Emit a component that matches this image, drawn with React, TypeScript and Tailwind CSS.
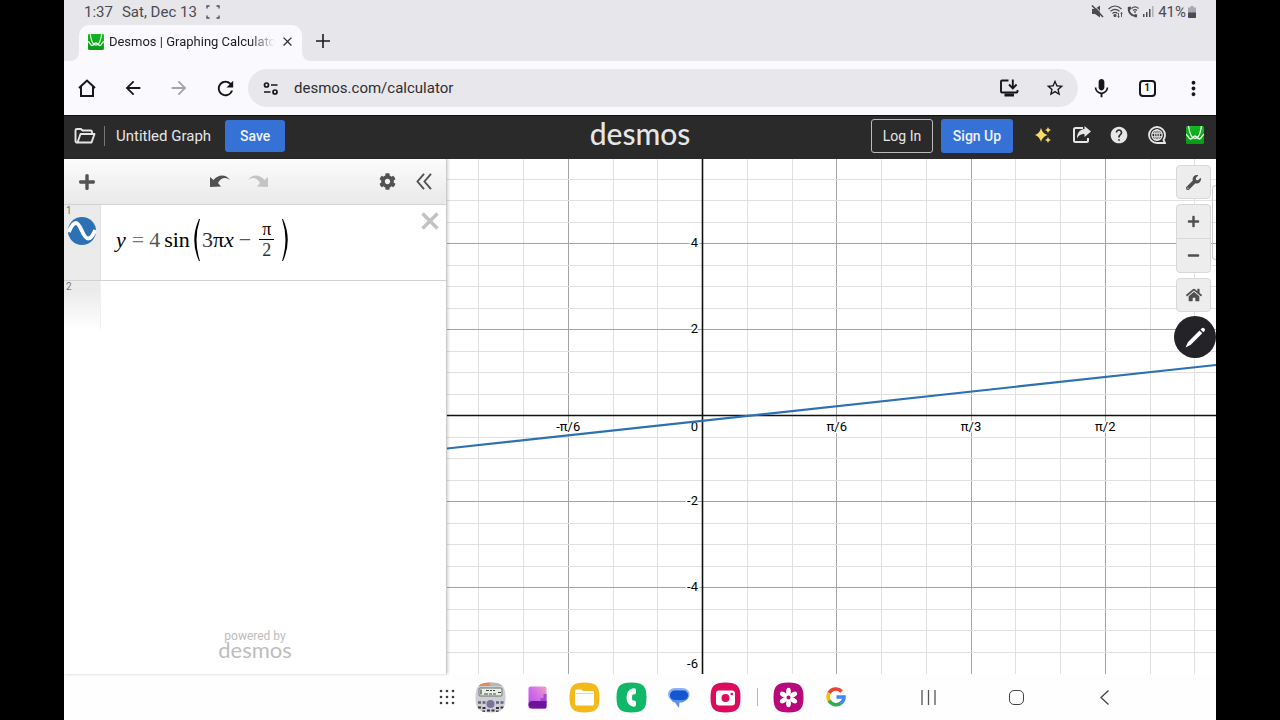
import React, { useState } from 'react';
import { FaCog, FaHome, FaMinus, FaPlus, FaWrench } from 'react-icons/fa';
import {
  MdArrowBack,
  MdArrowForward,
  MdClose,
  MdHelp,
  MdMic,
  MdMoreVert,
  MdOutlineHome,
  MdRefresh,
  MdStarOutline,
} from 'react-icons/md';

type IconButtonProps = {
  label: string;
  className?: string;
  children: React.ReactNode;
};

function IconButton({ label, className = '', children }: IconButtonProps) {
  return (
    <button
      type="button"
      aria-label={label}
      className={'flex shrink-0 items-center justify-center ' + className}
    >
      {children}
    </button>
  );
}

function DesmosIcon({ size }: { size: number }) {
  return (
    <svg width={size} height={size} viewBox="0 0 18 18" fill="none">
      <defs>
        <linearGradient id="desmosGreen" x1="0" y1="0" x2="0" y2="1">
          <stop offset="0" stopColor="#12b81f" />
          <stop offset="1" stopColor="#0a9a18" />
        </linearGradient>
      </defs>
      <rect width="18" height="18" rx="1.5" fill="url(#desmosGreen)" />
      <path d="M2.500 0C3.500 7 5.500 12.500 9 12.500S14.500 7 15.500 0" stroke="#e9ffe9" strokeWidth="1.300" />
      <path
        d="M0 8.500c2 0 2.500 4.500 4.500 4.500S7.500 10 9 10s2.500 3 4.500 3S16 8.500 18 8.500"
        stroke="#e9ffe9"
        strokeWidth="1.500"
      />
    </svg>
  );
}

function StatusBar() {
  return (
    <div className="flex h-[25px] items-center justify-between pr-5 pb-[2px] pl-5 text-[#4c4b50]">
      <div className="flex items-center gap-[9px] text-[15px] leading-6">
        <span>1:37</span>
        <span>Sat, Dec 13</span>
        <svg width="14" height="14" viewBox="0 0 14 14" fill="none" stroke="currentColor" strokeWidth="1.300">
          <path d="M1 3.500V1h2.500M10.500 1H13v2.500M13 10.500V13h-2.500M3.500 13H1v-2.500" />
        </svg>
      </div>
      <div className="flex items-center gap-1">
        <svg width="13" height="13" viewBox="0 0 13 13" fill="currentColor">
          <path d="M1 4h3l5-3.500v12L4 9H1z" />
          <path d="M2.500 0L13 10.500" stroke="#e7e6eb" />
          <path d="M1 .5l11 11.500" stroke="currentColor" strokeWidth="1.600" />
        </svg>
        <svg width="15" height="13" viewBox="0 0 15 13" fill="none" stroke="currentColor" strokeWidth="1.200">
          <path d="M.5 4c4-3.800 9-3.800 13 0M2.500 6.300c3-2.700 6-2.700 9 0M4.500 8.500c1.700-1.500 3.300-1.500 5 0" />
          <circle cx="7" cy="10.500" r="1" fill="currentColor" />
          <path d="M10.500 8v4.500M9.500 11.500l1 1 1-1M13.500 12V7.500M12.500 8.500l1-1 1 1" strokeWidth=".9" />
        </svg>
        <svg width="12" height="13" viewBox="0 0 12 13" fill="none" stroke="currentColor">
          <path d="M2 2.500C.8 7 4.500 11.500 9.500 11" strokeWidth="2" />
          <path d="M1 3.500l3-.5M7.500 10.500l2.500.5" strokeWidth="3" />
          <path d="M4.500 3.500c2.300-2 4.700-2 7 0M6 5.500c1.500-1.300 2.700-1.300 4 0" strokeWidth="1.200" />
          <circle cx="8" cy="7" r=".9" fill="currentColor" stroke="none" />
        </svg>
        <svg width="11" height="11" viewBox="0 0 11 11" fill="currentColor">
          <path d="M0 8h1.500v3H0zM3 6h1.500v5H3zM6 3h1.500v8H6z" />
          <path d="M9 0h1.500v11H9z" opacity=".35" />
        </svg>
        <span className="flex items-center gap-[2px] text-[15px] leading-6">
          41%
          <svg width="8" height="12" viewBox="0 0 8 12">
            <path d="M2.500 0h3v1.500H8V12H0V1.500h2.500z" fill="#aaa9ae" />
            <path d="M0 6.500h8V11q0 1-1 1H1q-1 0-1-1z" fill="#4c4b50" />
          </svg>
        </span>
      </div>
    </div>
  );
}

function TabStrip() {
  return (
    <div className="flex h-9 items-end pl-[5px]">
      <svg width="10" height="10" viewBox="0 0 10 10" className="shrink-0">
        <path d="M10 0v10H0q10 0 10-10z" fill="#faf9fd" />
      </svg>
      <div className="flex h-full w-[223px] shrink-0 items-center rounded-t-[10px] bg-[#faf9fd] pr-[3px] pb-[3px] pl-[9px]">
        <DesmosIcon size={16} />
        <span className="ml-[5px] w-[167px] overflow-hidden bg-linear-to-r from-[#1d1c20] from-85% to-transparent bg-clip-text text-[13px] leading-5 whitespace-nowrap text-transparent">
          Desmos | Graphing Calculator
        </span>
        <IconButton label="Close tab" className="w-6">
          <MdClose size={15} color="#333" />
        </IconButton>
      </div>
      <svg width="10" height="10" viewBox="0 0 10 10" className="shrink-0">
        <path d="M0 0v10h10Q0 10 0 0z" fill="#faf9fd" />
      </svg>
      <IconButton label="New tab" className="ml-px h-full w-5 pb-1">
        <svg width="14" height="14" viewBox="0 0 14 14" stroke="#1d1c20" strokeWidth="1.600">
          <path d="M7 0v14M0 7h14" />
        </svg>
      </IconButton>
    </div>
  );
}

function AddressBar() {
  const [url, setUrl] = useState('desmos.com/calculator');

  return (
    <div className="flex h-[54px] items-center bg-[#faf9fd] text-[#17161a]">
      <IconButton label="Home" className="w-[46px]">
        <svg width="18" height="20" viewBox="0 0 18 20" fill="none" stroke="currentColor" strokeWidth="2">
          <path d="M3 8.500V18h12V8.500M1 10l8-7.500 8 7.500" />
        </svg>
      </IconButton>
      <IconButton label="Back" className="w-[46px]">
        <MdArrowBack size={22} />
      </IconButton>
      <IconButton label="Forward" className="w-[46px] text-[#a5a4a9]">
        <MdArrowForward size={22} />
      </IconButton>
      <IconButton label="Reload" className="w-[46px]">
        <MdRefresh size={23} />
      </IconButton>
      <div className="flex h-[38px] flex-1 items-center rounded-full bg-[#e8e7eb]">
        <IconButton label="Site settings" className="w-[46px]">
          <svg width="16" height="13" viewBox="0 0 16 13" fill="none" stroke="currentColor" strokeWidth="1.700">
            <circle cx="3.500" cy="3" r="2" />
            <path d="M8 3h6.500M1 10h6.500" />
            <circle cx="12" cy="10" r="2" />
          </svg>
        </IconButton>
        <input
          type="text"
          aria-label="Address"
          value={url}
          onChange={(e) => setUrl(e.target.value)}
          className="min-w-0 flex-1 bg-transparent text-[15px] text-[#2e2d31] outline-none"
        />
        <IconButton label="Install app" className="w-[46px]">
          <svg width="20" height="20" viewBox="0 0 20 20" fill="none" stroke="currentColor" strokeWidth="1.900">
            <path d="M9.500 2.500H3q-1 0-1 1v10q0 1 1 1h14.500q1 0 1-1V12" />
            <path d="M13.800 1.500v8M10 6.500l3.800 3.800 3.800-3.800" />
            <path d="M5.500 17h9.500" strokeWidth="3" />
          </svg>
        </IconButton>
        <IconButton label="Bookmark" className="w-[46px]">
          <MdStarOutline size={20} />
        </IconButton>
      </div>
      <IconButton label="Voice search" className="w-[46px]">
        <MdMic size={23} />
      </IconButton>
      <IconButton label="Switch tabs" className="w-[46px]">
        <span className="flex h-[17px] w-[17px] items-center justify-center rounded-[4px] border-2 border-[#17161a] text-[10px] leading-3 font-bold">
          1
        </span>
      </IconButton>
      <IconButton label="More" className="w-[46px]">
        <MdMoreVert size={23} />
      </IconButton>
    </div>
  );
}

function DesmosHeader() {
  return (
    <header className="grid h-[44px] grid-cols-[1fr_auto_1fr] items-center border-t border-[#111] bg-[#2a2a2a] pb-[3px] text-[#e6e6e6]">
      <div className="flex items-center">
        <IconButton label="Open graph" className="w-10 pl-[2px]">
          <svg width="22" height="18" viewBox="0 0 22 18" fill="none" stroke="currentColor" strokeWidth="1.900" strokeLinejoin="round">
            <path d="M3.500 15.500l3-8.500h14l-3 8.500z" />
            <path d="M3.500 15.500q-2 0-2-1.500V3.500Q1.500 2 3 2h4l1.500 1.500h8q1.500 0 1.500 1.500v2" />
          </svg>
        </IconButton>
        <span className="h-5 w-px bg-[#777]" />
        <span className="ml-[11px] text-[15px]">Untitled Graph</span>
        <button
          type="button"
          className="ml-[14px] h-8 w-[60px] rounded-[3px] bg-[#3671d6] text-sm font-medium text-[#eef3fc]"
        >
          Save
        </button>
      </div>
      <h1 className="pb-[7px] font-[Lato] text-[30px] leading-8 font-medium">desmos</h1>
      <div className="flex items-center justify-end pr-[2px]">
        <a
          href="#login"
          className="flex h-[34px] w-[62px] items-center justify-center rounded-[3px] border border-[#bbb] text-sm"
        >
          Log In
        </a>
        <a
          href="#signup"
          className="mr-[11px] ml-2 flex h-[34px] w-[72px] items-center justify-center rounded-[3px] bg-[#3671d6] text-sm font-medium text-[#eef3fc]"
        >
          Sign Up
        </a>
        <div className="flex items-center pb-[3px]">
          <IconButton label="What's new" className="w-[38px]">
            <svg width="17" height="16" viewBox="0 0 17 16" fill="#fbdc62">
              <path d="M6 1Q7.500 6.500 12.500 8 7.500 9.500 6 15 4.500 9.500 0 8 4.500 6.500 6 1z" />
              <path d="M13 0q.4 2.600 3 3-2.600.4-3 3-.4-2.600-3-3 2.600-.4 3-3zM13 10q.4 2.600 3 3-2.600.4-3 3-.4-2.600-3-3 2.600-.4 3-3z" />
            </svg>
          </IconButton>
          <IconButton label="Share" className="w-[38px]">
            <svg width="19" height="18" viewBox="0 0 19 18" fill="none">
              <path
                d="M11 2H3.500Q2 2 2 3.500v11Q2 16 3.500 16h11q1.500 0 1.500-1.500V12"
                stroke="currentColor"
                strokeWidth="2"
              />
              <path d="M12.500 0L19 5.500 12.500 11V8C9 8 7 9 5 12.500 5 7 7.500 3.500 12.500 3z" fill="currentColor" />
            </svg>
          </IconButton>
          <IconButton label="Help" className="w-[38px]">
            <MdHelp size={20} />
          </IconButton>
          <IconButton label="Language" className="w-[38px]">
            <svg width="18" height="18" viewBox="0 0 18 18" fill="none" stroke="currentColor">
              <path d="M9 17A8 8 0 1 1 17 9q0 3-1.500 5l1.500 3z" strokeWidth="1.800" />
              <circle cx="9" cy="9" r="5.200" strokeWidth="1.300" />
              <ellipse cx="9" cy="9" rx="2.300" ry="5.200" strokeWidth="1.100" />
              <path d="M4 7.200h10M4 10.800h10M9 4v10" strokeWidth="1.100" />
            </svg>
          </IconButton>
          <IconButton label="Calculators" className="w-[38px]">
            <DesmosIcon size={18} />
          </IconButton>
        </div>
      </div>
    </header>
  );
}

function Paren({ close = false }: { close?: boolean }) {
  return (
    <svg width="7" height="42" viewBox="0 0 7 42" fill="#000">
      {close ? (
        <path d="M1 0Q10.500 21 1 42H0Q7 21 0 0z" />
      ) : (
        <path d="M6 0Q-3.500 21 6 42h1Q0 21 7 0z" />
      )}
    </svg>
  );
}

function Formula() {
  return (
    <div className="flex items-center font-['Liberation_Serif',serif] text-[22px] leading-6 text-black">
      <i>y</i>
      <span className="ml-[6px] text-[#777]">=</span>
      <span className="ml-[5px] text-[#555]">4</span>
      <span className="ml-1">sin</span>
      <span className="ml-[3px] flex items-center">
        <Paren />
        <span className="ml-[2px] text-[#333]">3</span>
        <span>π</span>
        <i>x</i>
        <span className="ml-[5px] text-[#555]">−</span>
        <span className="mx-2 flex w-[15px] flex-col items-center text-lg leading-5">
          <span className="w-full border-b border-black text-center">π</span>
          <span className="text-[#333]">2</span>
        </span>
        <Paren close />
      </span>
    </div>
  );
}

function ExpressionPanel() {
  return (
    <section className="relative z-10 flex w-[383px] shrink-0 flex-col border-r border-[#ccc] bg-white shadow-[1px_0_3px_#0003]">
      <div className="flex h-[46px] items-center border-b border-[#d2d2d2] bg-linear-to-b from-[#fcfcfc] to-[#e9e9e9] text-[#525252]">
        <IconButton label="Add item" className="w-[46px]">
          <FaPlus size={18} />
        </IconButton>
        <IconButton label="Undo" className="ml-[91px] w-[38px]">
          <svg width="20" height="14" viewBox="0 0 20 14" fill="currentColor">
            <path d="M0 2l3.500 3C8-.5 15.500-1.500 20 5c-4.500-3.500-9-2.500-12 3l3 3.500L0 12z" />
          </svg>
        </IconButton>
        <IconButton label="Redo" className="w-[38px] text-[#c4c4c4]">
          <svg width="20" height="14" viewBox="0 0 20 14" fill="currentColor">
            <path d="M20 2l-3.500 3C12-.5 4.500-1.500 0 5c4.500-3.500 9-2.500 12 3l-3 3.500L20 12z" />
          </svg>
        </IconButton>
        <IconButton label="Settings" className="ml-auto w-[38px]">
          <FaCog size={17} />
        </IconButton>
        <IconButton label="Hide list" className="mr-1 w-9">
          <svg width="16" height="17" viewBox="0 0 16 17" fill="none" stroke="currentColor" strokeWidth="1.900">
            <path d="M8 .8L1.500 8.500 8 16.200M15 .8L8.500 8.500 15 16.200" />
          </svg>
        </IconButton>
      </div>

      <div className="flex h-[76px] border-b border-[#d2d2d2]">
        <div className="flex w-[37px] shrink-0 flex-col border-r border-[#e0e0e0] bg-[#ebebeb]">
          <span className="pl-[2px] text-[10px] leading-3 text-[#777]">1</span>
          <IconButton label="Toggle curve" className="w-9">
            <svg width="28" height="28" viewBox="0 0 28 28" fill="none">
              <circle cx="14" cy="14" r="14" fill="#2d70b3" />
              <path
                d="M.8 15C3.500 8.500 5.500 6 8 6c4.500 0 7 15.500 12 15.500 2.800 0 5-3 7.200-8.500"
                stroke="#fff"
                strokeWidth="3.800"
              />
            </svg>
          </IconButton>
        </div>
        <div className="flex flex-1 items-center pb-[6px] pl-[15px]">
          <Formula />
        </div>
        <IconButton label="Delete expression" className="h-8 w-8">
          <svg width="18" height="18" viewBox="0 0 18 18" stroke="#c2c2c2" strokeWidth="3.400">
            <path d="M1.500 1.500l15 15M16.500 1.500l-15 15" />
          </svg>
        </IconButton>
      </div>

      <div className="h-[48px] w-[37px] border-r border-[#f0f0f0] bg-linear-to-b from-[#ebebeb] from-20% to-white pl-[2px] text-[10px] leading-3 text-[#777]">
        2
      </div>

      <div className="mt-auto flex flex-col items-center pb-4 text-[#bdbdbd]">
        <span className="text-xs leading-3">powered by</span>
        <span className="font-[Lato] text-[22px] leading-4">desmos</span>
      </div>
    </section>
  );
}

// graph paper geometry, origin and spacing in svg units
const ORIGIN_X = 255.5;
const ORIGIN_Y = 256.5;
const STEP_X = 44.75;
const STEP_Y = 21.5;

const xLines = Array.from({ length: 17 }, (_, i) => i - 5);
const yLines = Array.from({ length: 23 }, (_, i) => i - 11);

const xLabels = [
  { n: -3, text: '-π/6' },
  { n: 3, text: 'π/6' },
  { n: 6, text: 'π/3' },
  { n: 9, text: 'π/2' },
];
const yLabels = [
  { y: 88, text: '4' },
  { y: 174, text: '2' },
  { y: 346, text: '-2' },
  { y: 432, text: '-4' },
  { y: 509, text: '-6' },
];

function Graph() {
  return (
    <svg
      viewBox="0 0 769 515"
      preserveAspectRatio="xMinYMin slice"
      className="absolute inset-0 h-full w-full"
    >
      {xLines.map((n) => (
        <path
          key={n}
          d={`M${Math.floor(ORIGIN_X + n * STEP_X) + 0.5} 0V515`}
          stroke={n % 3 === 0 ? '#a3a3a3' : '#e0e0e0'}
        />
      ))}
      {yLines.map((n) => (
        <path
          key={n}
          d={`M0 ${Math.floor(ORIGIN_Y + n * STEP_Y) + 0.5}H769`}
          stroke={n % 4 === 0 ? '#a3a3a3' : '#e0e0e0'}
        />
      ))}
      <path d="M255.500 0V515M0 256.500H769" stroke="#111" strokeWidth="1.600" />
      <g fontSize="13" fill="#000" stroke="#fff" strokeWidth="3" paintOrder="stroke">
        {xLabels.map((l) => (
          <text key={l.text} x={ORIGIN_X + l.n * STEP_X} y="272" textAnchor="middle">
            {l.text}
          </text>
        ))}
        {yLabels.map((l) => (
          <text key={l.text} x="251" y={l.y} textAnchor="end">
            {l.text}
          </text>
        ))}
        <text x="251" y="272" textAnchor="end">
          0
        </text>
      </g>
      <path d="M0 289.500L769 206" stroke="#2d70b3" strokeWidth="2.200" />
    </svg>
  );
}

function GraphControls() {
  return (
    <div className="absolute top-[6px] right-0 flex flex-col items-end gap-1 text-[#4f4f4f]">
      <div className="mr-[5px] flex w-[35px] flex-col gap-[5px]">
        <IconButton label="Graph settings" className="h-[34px] rounded border border-[#d8d8d8] bg-[#ededed]">
          <FaWrench size={15} />
        </IconButton>
        <div className="flex flex-col rounded border border-[#d8d8d8] bg-[#ededed]">
          <IconButton label="Zoom in" className="h-[34px] border-b border-[#d8d8d8]">
            <FaPlus size={13} />
          </IconButton>
          <IconButton label="Zoom out" className="h-[33px]">
            <FaMinus size={13} />
          </IconButton>
        </div>
        <IconButton label="Default viewport" className="h-[34px] rounded border border-[#d8d8d8] bg-[#ededed]">
          <FaHome size={16} />
        </IconButton>
      </div>
      <IconButton label="Edit" className="h-[42px] w-[42px] rounded-full bg-[#242428]">
        <svg width="21" height="22" viewBox="0 0 21 22" fill="#fff">
          <path d="M.5 21.500L3 16 14.500 4.500l2.800 2.800L5.800 18.800zM15.500 3.500l1.300-1.300q1.200-1 2.200 0l.6.6q1 1 0 2.200l-1.300 1.300z" />
        </svg>
      </IconButton>
    </div>
  );
}

function AppTile({ children }: { children: React.ReactNode }) {
  return (
    <svg width="31" height="31" viewBox="0 0 31 31" fill="none">
      {children}
    </svg>
  );
}

function Squircle({ fill }: { fill: string }) {
  return (
    <path
      d="M15.500.5C27 .5 30.500 4 30.500 15.500S27 30.500 15.500 30.500.5 27 .5 15.500 4 .5 15.500.5z"
      fill={fill}
    />
  );
}

function Taskbar() {
  return (
    <nav className="flex h-[46px] items-center bg-[#fefefe] pl-[363px]">
      <IconButton label="All apps" className="w-10">
        <svg width="16" height="16" viewBox="0 0 16 16" fill="#3d3d3d">
          {[2, 8, 14].map((y) =>
            [2, 8, 14].map((x) => <circle key={x + '-' + y} cx={x} cy={y} r="1.300" />)
          )}
        </svg>
      </IconButton>
      <IconButton label="Scientific calculator" className="w-[47px]">
        <AppTile>
          <clipPath id="calcClip">
            <path d="M15.500.5C27 .5 30.500 4 30.500 15.500S27 30.500 15.500 30.500.5 27 .5 15.500 4 .5 15.500.5z" />
          </clipPath>
          <g clipPath="url(#calcClip)">
            <path d="M0 0h31v31H0z" fill="#cfcfd3" />
            <path d="M0 0h15v4H0z" fill="#e58a50" />
            <path d="M15 0h16v4H15z" fill="#b5b5ba" />
            <rect x="4" y="6" width="23" height="8" rx="1" fill="#e6eee4" stroke="#6b6d70" />
            <path d="M6 7.500v5M11 8.500h3M15 8.500h2M18 8.500h2M9 12h4M14 12h3M18 12h3M23 10.500h3" stroke="#444" strokeWidth="1.200" />
            <path d="M3 20.500h3M7.500 20.500h3M21 20.500h3M25.500 20.500h3" stroke="#62627c" strokeWidth="2.400" />
            <path d="M3 25.500h3M7.500 26h3M12 28.500h3M16.500 28.500h3M21 26h3M25.500 25.500h3M7 29.500h3M21 29.500h3" stroke="#35353f" strokeWidth="2" />
            <circle cx="15.500" cy="22" r="4" fill="#77749d" />
          </g>
        </AppTile>
      </IconButton>
      <IconButton label="Books" className="w-[47px]">
        <AppTile>
          <defs>
            <linearGradient id="bookCover" x1="0" y1="1" x2="1" y2="0">
              <stop offset="0" stopColor="#b44be0" />
              <stop offset=".6" stopColor="#d674e8" />
              <stop offset="1" stopColor="#f0a2b4" />
            </linearGradient>
          </defs>
          <rect x="6.500" y="4.500" width="18" height="22" rx="2" fill="url(#bookCover)" />
          <path d="M24.500 12h-3v4h-3v5h6z" fill="#a04bd0" />
          <path d="M24.500 19H10q-3.500 0-3.500 3.500T10 26.500h13q1.500 0 1.500-1.500z" fill="#6d1599" />
        </AppTile>
      </IconButton>
      <IconButton label="My Files" className="w-[47px]">
        <AppTile>
          <Squircle fill="#f2bb1b" />
          <path d="M6 9q0-1.500 1.500-1.500h5l1.500 1.500h10q1 0 1 1V22q0 1.500-1.500 1.500h-16Q6 23.500 6 22z" fill="#fff" />
          <path d="M7 11.500h17" stroke="#f6d97c" />
        </AppTile>
      </IconButton>
      <IconButton label="Phone" className="w-[47px]">
        <AppTile>
          <Squircle fill="#10b768" />
          <path
            d="M16.500 6.500q3.500-1 3.500 1.500v2.500q0 2-2 2h-1q-1 0-1 3t1 3h1q2 0 2 2V23q0 2.500-3.500 1.500-6-2-6-9t6-9z"
            fill="#fff"
          />
        </AppTile>
      </IconButton>
      <IconButton label="Messages" className="w-[47px]">
        <AppTile>
          <path d="M12 6h7c5 0 7.500 3 7.500 6.500S23.500 19 19 19h-6C8 19 5 16 5 12.500S7.500 6 12 6z" fill="#8fb1f5" />
          <path d="M7 13q0-4.500 6-4.500h6q6.500 0 6.500 5T19 20.500h-2.500L16 26l-4-5.500Q7 19.500 7 13z" fill="#5f90f0" />
          <rect x="7" y="8.500" width="18" height="9.500" rx="4.700" fill="#1257cf" />
        </AppTile>
      </IconButton>
      <IconButton label="Camera" className="w-[47px]">
        <AppTile>
          <Squircle fill="#dc0b5c" />
          <rect x="6" y="8.500" width="19" height="15" rx="3" fill="#fff" />
          <circle cx="15.500" cy="16" r="4" fill="#dc0b5c" />
          <circle cx="21.800" cy="12" r="1.300" fill="#dc0b5c" />
        </AppTile>
      </IconButton>
      <span className="flex w-4 justify-center">
        <span className="h-[18px] w-px bg-[#b5b5b5]" />
      </span>
      <IconButton label="Gallery" className="w-[47px]">
        <AppTile>
          <Squircle fill="#b9087a" />
          {[0, 60, 120, 180, 240, 300].map((a) => (
            <ellipse key={a} cx="15.500" cy="9.800" rx="2.400" ry="4" fill="#fff" transform={`rotate(${a} 15.500 15.500)`} />
          ))}
          <circle cx="15.500" cy="15.500" r="3.500" fill="#fff" />
          <circle cx="15.500" cy="15.500" r="2" fill="#b9087a" />
        </AppTile>
      </IconButton>
      <IconButton label="Google" className="w-[47px]">
        <svg width="20" height="20" viewBox="0 0 20 20" fill="none" strokeWidth="3.600">
          <path d="M3 6a8 8 0 0 1 12.700-1.600" stroke="#ea4335" />
          <path d="M3.300 13.800A8 8 0 0 1 3.200 5.800" stroke="#fbbc05" />
          <path d="M14.800 16.200A8 8 0 0 1 3.200 13.600" stroke="#34a853" />
          <path d="M10.500 10h7.500q0 4-3.300 6.300" stroke="#4285f4" />
        </svg>
      </IconButton>
      <IconButton label="Recents" className="ml-[25px] h-9 w-[88px]">
        <svg width="15" height="15" viewBox="0 0 15 15" stroke="#555" strokeWidth="1.300">
          <path d="M1 0v15M7.500 0v15M14 0v15" />
        </svg>
      </IconButton>
      <IconButton label="Home screen" className="h-9 w-[88px]">
        <span className="h-[15px] w-[15px] rounded-[5px] border border-[#444]" />
      </IconButton>
      <IconButton label="Go back" className="h-9 w-[88px]">
        <svg width="9" height="15" viewBox="0 0 9 15" fill="none" stroke="#444" strokeWidth="1.300">
          <path d="M8.500.5l-7.500 7 7.500 7" />
        </svg>
      </IconButton>
    </nav>
  );
}

export default function App() {
  return (
    <div className="min-h-screen bg-black px-[5%] font-[Roboto,sans-serif]">
      <div className="flex min-h-screen flex-col bg-[#e7e6eb]">
        <StatusBar />
        <TabStrip />
        <AddressBar />
        <DesmosHeader />
        <main className="flex flex-1 bg-white">
          <ExpressionPanel />
          <section aria-label="Graph" className="relative flex-1 overflow-hidden">
            <Graph />
            <div className="absolute top-[26px] right-0 h-[75px] w-1 rounded-l border border-r-0 border-[#ccc]" />
            <GraphControls />
          </section>
        </main>
        <Taskbar />
      </div>
    </div>
  );
}
